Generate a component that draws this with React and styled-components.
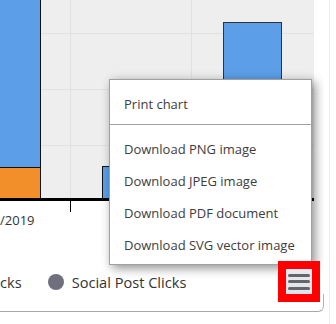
import React from "react"
import styled, { createGlobalStyle } from "styled-components"

const GlobalStyle = createGlobalStyle`
  html, body {
    margin: 0;
    padding: 0;
    background: #ffffff;
  }
  body {
    font-family: "Open Sans", "Liberation Sans", sans-serif;
  }
`

const Page = styled.div`
  display: flex;
  width: 336px;
  height: 324px;
  overflow: hidden;
`

const Card = styled.div`
  position: relative;
  width: 324px;
  height: 312px;
  display: flex;
  flex-direction: column;
  overflow: hidden;
`

const SideLine = styled.div`
  width: 1px;
  height: 324px;
  margin-left: 5px;
  background: #ececec;
`

const AxisLabel = styled.div`
  height: 16px;
  font-size: 13px;
  line-height: 16px;
  color: #333333;
`

const LegendRow = styled.div`
  display: flex;
  align-items: center;
  height: 24px;
  margin-top: 42px;
  gap: 26px;
`

const LegendItem = styled.div`
  display: flex;
  align-items: center;
  gap: 8px;
  font-size: 14.6px;
  color: #333333;
  white-space: nowrap;
`

const Dot = styled.span`
  width: 16px;
  height: 16px;
  border-radius: 50%;
  background: ${(p) => p.color};
`

const BottomEdge = styled.div`
  flex: 1;
  border-right: 1px solid #b4b4b4;
  border-bottom: 1px solid #a8a8a8;
  border-bottom-right-radius: 6px;
`

const Menu = styled.div`
  position: absolute;
  left: 109px;
  top: 79px;
  width: 201px;
  padding: 8px 0 3px;
  background: #ffffff;
  border: 1px solid #a0a0a0;
  box-shadow: 3px 3px 10px rgba(0, 0, 0, 0.45);
`

const MenuItem = styled.div`
  height: 32px;
  padding: 0 14px;
  display: flex;
  align-items: center;
  font-size: 13px;
  color: #3d3d3d;
  white-space: nowrap;
`

const Separator = styled.div`
  height: 1px;
  margin: 4px 0 8px;
  background: #a0a0a0;
`

const Highlight = styled.div`
  position: absolute;
  left: 278px;
  top: 261px;
  width: 26px;
  height: 25px;
  border: 8px solid #ff0000;
  background: linear-gradient(#e9ebf1, #dfe2ea);
  display: flex;
  flex-direction: column;
  justify-content: center;
  align-items: center;
  gap: 3.5px;
`

const Bar = styled.span`
  width: 22px;
  height: 3px;
  border-radius: 2px;
  background: #666666;
`

const BLUE = "#5c9fe8"
const ORANGE = "#f28f2a"

const Chart = () => (
  <svg width="314" height="212" style={{ display: "block" }}>
    <rect x="0" y="0" width="314" height="199" fill="#eeeeee" />
    <g stroke="#e1e1e1" strokeWidth="1">
      <line x1="0" y1="33.5" x2="314" y2="33.5" />
      <line x1="0" y1="89.5" x2="314" y2="89.5" />
      <line x1="0" y1="145.5" x2="314" y2="145.5" />
      <line x1="70.5" y1="0" x2="70.5" y2="199" />
      <line x1="191.5" y1="0" x2="191.5" y2="199" />
    </g>
    <g stroke="#111111" strokeWidth="1">
      <rect x="-2" y="-2" width="42.5" height="169.5" fill={BLUE} />
      <rect x="-2" y="167.5" width="42.5" height="32" fill={ORANGE} />
      <rect x="102.5" y="166.5" width="40" height="33" fill={BLUE} />
      <rect x="223.5" y="22.5" width="58" height="177" fill={BLUE} stroke="#333333" />
    </g>
    <rect x="0" y="198" width="314" height="3" fill="#000000" />
    <line x1="70.5" y1="201" x2="70.5" y2="212" stroke="#000000" strokeWidth="1" />
  </svg>
)

export default function App() {
  return (
    <>
      <GlobalStyle />
      <Page>
        <Card>
          <Chart />
          <AxisLabel>/2019</AxisLabel>
          <LegendRow>
            <LegendItem>cks</LegendItem>
            <LegendItem>
              <Dot color="#6f6f7d" />
              Social Post Clicks
            </LegendItem>
          </LegendRow>
          <BottomEdge />
          <Menu>
            <MenuItem>Print chart</MenuItem>
            <Separator />
            <MenuItem>Download PNG image</MenuItem>
            <MenuItem>Download JPEG image</MenuItem>
            <MenuItem>Download PDF document</MenuItem>
            <MenuItem>Download SVG vector image</MenuItem>
          </Menu>
          <Highlight>
            <Bar />
            <Bar />
            <Bar />
          </Highlight>
        </Card>
        <SideLine />
      </Page>
    </>
  )
}
